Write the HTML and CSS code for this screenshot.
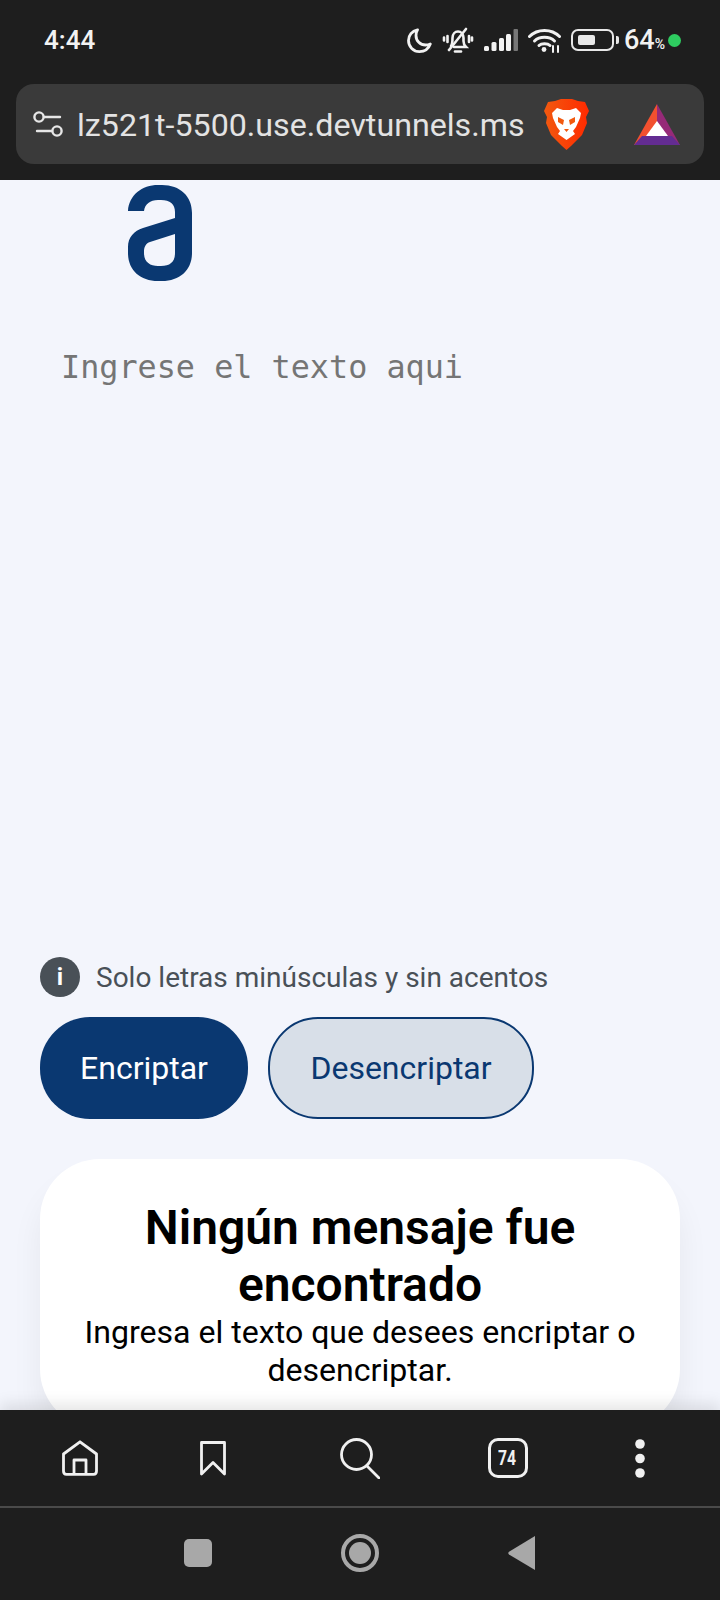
FILE: index.html
```html
<!DOCTYPE html>
<html lang="es">
<head>
  <meta charset="UTF-8">
  <title>Encriptador</title>
  <link rel="stylesheet" href="styles.css">
</head>
<body>
  <div class="screen">
    <header class="browser-top">
      <div class="status-bar">
        <span class="time">4:44</span>
        <div class="status-icons">
          <svg width="25" height="25" viewBox="0 0 25 25" fill="none" stroke="#f2f2f2" stroke-width="2.8" stroke-linejoin="round"><path d="M10.5 1.8 C5 3 1.5 7.5 1.5 12.5 C1.5 18.8 6.4 23.6 12.5 23.6 C17.4 23.6 21.6 20.6 23.3 16 C21.8 16.7 20.2 17 18.6 17 C13.2 17 9 12.8 9 7.4 C9 5.4 9.5 3.5 10.5 1.8 Z"/></svg>
          <svg width="32" height="27" viewBox="0 0 32 27" fill="none" stroke="#f2f2f2" stroke-width="2.6" stroke-linecap="round"><path d="M9 19 C10.5 17 10.5 14 10.5 11 C10.5 7 13 4.5 16 4.5 C19 4.5 21.5 7 21.5 11 V14 C21.5 17 22.5 18.5 24 20 H12"/><path d="M13 24.5 H19"/><path d="M7 23 L24 2"/><path d="M5.5 9 V15 M2 10.5 V13.5 M27 9 V15 M30 10.5 V13.5"/></svg>
          <svg width="34" height="22" viewBox="0 0 34 22"><rect x="0" y="17" width="5" height="5" rx="1.5" fill="#f2f2f2"/><rect x="7.5" y="13" width="5" height="9" rx="1.5" fill="#f2f2f2"/><rect x="15" y="9" width="5" height="13" rx="1.5" fill="#f2f2f2"/><rect x="22" y="5" width="5" height="17" rx="1.5" fill="#f2f2f2"/><rect x="29.5" y="0" width="4.5" height="22" rx="1" fill="#777"/></svg>
          <svg width="33" height="25" viewBox="0 0 33 25" fill="none" stroke="#f2f2f2" stroke-width="3" stroke-linecap="round"><path d="M1.5 8.5 C9.5 0.5 23.5 0.5 31.5 8.5"/><path d="M6.5 13 C11.5 8 21.5 8 26.5 13"/><path d="M11 17.5 C13.5 15 19.5 15 22 17.5"/><circle cx="16" cy="21.5" r="2.4" fill="#f2f2f2" stroke="none"/><path d="M25 18 V24 M30 18 V24" stroke-width="2"/></svg>
          <div class="battery"><div class="battery-body"><div class="battery-fill"></div></div><div class="battery-nub"></div></div>
          <span class="battery-text">64<small>%</small></span>
          <span class="green-dot"></span>
        </div>
      </div>
      <div class="address-bar">
        <svg class="tune" width="30" height="28" viewBox="0 0 30 28" fill="none" stroke="#e6e6e6" stroke-width="2.4" stroke-linecap="round"><circle cx="6" cy="7" r="4.6"/><path d="M11 7 H27"/><circle cx="24" cy="21" r="4.6"/><path d="M4 21 H19"/></svg>
        <span class="url">lz521t-5500.use.devtunnels.ms</span>
        <svg class="brave" width="45" height="51" viewBox="0 0 45 51">
          <defs><linearGradient id="braveGrad" x1="0" x2="1"><stop offset="0" stop-color="#f2590f"/><stop offset="1" stop-color="#ff2a00"/></linearGradient></defs>
          <path d="M11 2 L17 0 H28 L34 2 L41 3 L45 12 L42 18 L43 24 L38 36 L27 47 L22.5 51 L18 47 L7 36 L2 24 L3 18 L0 12 L4 3 Z" fill="url(#braveGrad)"/>
          <path d="M8 14 L13 9 L19 11 H26 L32 9 L37 14 L36 19 L32 28 L29 32 L31 35 L22.5 41 L14 35 L16 32 L13 28 L9 19 Z" fill="#fff"/>
          <path d="M14 18 L20 21 L19 26 L14 23 Z M31 18 L25 21 L26 26 L31 23 Z M20 30 H25 L22.5 33 Z" fill="#f2590f"/>
        </svg>
        <svg class="bat" width="46" height="41" viewBox="0 0 46 41">
          <path d="M23 0 L0 41 H15 L23 26 Z" fill="#f2502f"/>
          <path d="M23 0 L46 41 H31 L23 26 Z" fill="#962a78"/>
          <path d="M0 41 L8 32 H38 L46 41 Z" fill="#632c92"/>
          <path d="M23 17 L34 32 H12 Z" fill="#fff"/>
        </svg>
      </div>
    </header>

    <main class="page">
      <svg class="logo" width="64" height="96" viewBox="0 0 64 96">
        <path fill-rule="evenodd" fill="#0a3871" d="M0 26 C1 10 14 0 30 0 H34 C52 0 64 11 64 28 V68 C64 85 52 96 34 96 H30 C12 96 0 85 0 68 V62 C0 52 6 46 15 43 L47 33 V27 C47 19 42 15 33 15 H30 C22 15 17 19 16 26 Z M47 49 L22 57 C18 58 16 62 16 66 V68 C16 77 22 81 30 81 H33 C42 81 47 77 47 68 Z"/>
      </svg>

      <textarea class="message-input" spellcheck="false">Ingrese el texto aqui</textarea>

      <div class="hint">
        <span class="hint-icon">i</span>
        <span class="hint-text">Solo letras minúsculas y sin acentos</span>
      </div>

      <div class="actions">
        <button class="btn btn-primary">Encriptar</button>
        <button class="btn btn-secondary">Desencriptar</button>
      </div>

      <section class="result-card">
        <h2>Ningún mensaje fue encontrado</h2>
        <p>Ingresa el texto que desees encriptar o desencriptar.</p>
      </section>
    </main>

    <footer class="browser-bottom">
      <nav class="toolbar">
        <svg width="38" height="36" viewBox="0 0 38 36" fill="none" stroke="#f0f0f0" stroke-width="2.8" stroke-linejoin="round"><path d="M19 1.8 L2.5 14 V31 C2.5 33 3.5 34.4 5.5 34.4 H32.5 C34.5 34.4 35.5 33 35.5 31 V14 Z"/><path d="M13 34 V20 H25 V34"/></svg>
        <svg width="26" height="35" viewBox="0 0 26 35" fill="none" stroke="#f0f0f0" stroke-width="2.8" stroke-linejoin="round"><path d="M1.5 1.5 H24.5 V33 L13 21.5 L1.5 33 Z"/></svg>
        <svg width="40" height="41" viewBox="0 0 40 41" fill="none" stroke="#f0f0f0" stroke-width="2.8" stroke-linecap="round"><circle cx="16.5" cy="16.5" r="15"/><path d="M27 28 L39 40"/></svg>
        <div class="tab-count"><span>74</span></div>
        <svg width="10" height="39" viewBox="0 0 10 39" fill="#f0f0f0"><circle cx="5" cy="5" r="4.8"/><circle cx="5" cy="19.5" r="4.8"/><circle cx="5" cy="34" r="4.8"/></svg>
      </nav>
      <nav class="system-nav">
        <span class="sys-square"></span>
        <span class="sys-circle"><span class="sys-circle-inner"></span></span>
        <svg width="27" height="34" viewBox="0 0 27 34" fill="#a8a8a8"><path d="M27 0 V34 L1 18.5 C0 17.8 0 16.4 1 15.7 Z"/></svg>
      </nav>
    </footer>
  </div>
</body>
</html>
```

FILE: styles.css
```css
* {
  box-sizing: border-box;
}

body {
  margin: 0;
  background: #f3f5fc;
  font-family: Roboto, "Liberation Sans", sans-serif;
}

.screen {
  display: flex;
  flex-direction: column;
  width: 720px;
  height: 1600px;
  overflow: hidden;
}

/* browser chrome, top */
.browser-top {
  flex: none;
  height: 180px;
  padding: 0 16px;
  background: #1e1e1e;
}

.status-bar {
  display: flex;
  align-items: center;
  justify-content: space-between;
  height: 84px;
  padding: 0 23px 4px 28px;
  color: #f2f2f2;
}

.time {
  font-size: 26px;
  font-weight: 500;
}

.status-icons {
  display: flex;
  align-items: center;
  gap: 10px;
}

.battery {
  display: flex;
  align-items: center;
  gap: 2px;
}

.battery-body {
  width: 43px;
  height: 22px;
  padding: 4px 5px;
  border: 2.5px solid #e8e8e8;
  border-radius: 7px;
}

.battery-fill {
  width: 60%;
  height: 100%;
  background: #e8e8e8;
  border-radius: 2px;
}

.battery-nub {
  width: 3px;
  height: 8px;
  background: #e8e8e8;
  border-radius: 0 2px 2px 0;
}

.battery-text {
  margin-left: -5px;
  font-size: 27px;
  font-weight: 500;
}

.battery-text small {
  font-size: 14px;
}

.green-dot {
  width: 13px;
  height: 13px;
  margin-left: -7px;
  background: #2ecc60;
  border-radius: 50%;
}

.address-bar {
  display: flex;
  align-items: center;
  height: 80px;
  padding-left: 17px;
  background: #3a3a3a;
  border-radius: 18px;
}

.url {
  margin: 2px 0 0 14px;
  font-size: 32.2px;
  color: #e3e3e3;
  white-space: nowrap;
}

.brave {
  margin-left: 19px;
}

.bat {
  margin-left: 45px;
}

/* page */
.page {
  flex: 1;
  min-height: 0;
  padding: 5px 40px 0;
  overflow: hidden;
}

.logo {
  display: block;
  margin-left: 88px;
}

.message-input {
  display: block;
  width: 100%;
  height: 596px;
  margin: 64px 0 16px;
  padding: 0 21px;
  border: none;
  outline: none;
  resize: none;
  overflow: hidden;
  background: transparent;
  font-family: "DejaVu Sans Mono", "Liberation Mono", monospace;
  font-size: 31.8px;
  line-height: 44px;
  color: #757575;
}

.hint {
  display: flex;
  align-items: center;
  gap: 16px;
}

.hint-icon {
  display: flex;
  align-items: center;
  justify-content: center;
  width: 40px;
  height: 40px;
  background: #495057;
  border-radius: 50%;
  font-size: 24px;
  font-weight: 700;
  color: #fff;
}

.hint-text {
  font-size: 28px;
  color: #495057;
}

.actions {
  display: flex;
  gap: 20px;
  margin-top: 20px;
}

.btn {
  height: 102px;
  border-radius: 50px;
  font-family: inherit;
  font-size: 32px;
  cursor: pointer;
}

.btn-primary {
  width: 208px;
  background: #0a3871;
  border: none;
  color: #fff;
}

.btn-secondary {
  width: 266px;
  background: #d8dfe8;
  border: 2px solid #0a3871;
  color: #0a3871;
}

.result-card {
  margin-top: 40px;
  padding: 40px 32px;
  background: #fff;
  border-radius: 60px;
  box-shadow: 0 24px 32px rgba(0, 0, 0, 0.06);
  text-align: center;
}

.result-card h2 {
  margin: 0;
  font-size: 48px;
  font-weight: 600;
  line-height: 57px;
  color: #000;
}

.result-card p {
  margin: 0;
  font-size: 32.1px;
  line-height: 38px;
  color: #000;
}

/* browser chrome, bottom */
.browser-bottom {
  position: relative;
  flex: none;
  height: 190px;
  background: #1e1e1e;
  box-shadow: 0 -6px 14px rgba(0, 0, 0, 0.1);
}

.toolbar {
  display: grid;
  grid-template-columns: 160px 105px 190px 105px 160px;
  align-items: center;
  justify-items: center;
  height: 98px;
  border-bottom: 2px solid #4a4a4a;
}

.tab-count {
  display: flex;
  align-items: center;
  justify-content: center;
  width: 40px;
  height: 40px;
  border: 3px solid #f0f0f0;
  border-radius: 10px;
  font-size: 21px;
  font-weight: 700;
  color: #f0f0f0;
}

/* the browser draws this counter in a narrow face */
.tab-count span {
  transform: scaleX(0.75);
}

.system-nav {
  display: flex;
  align-items: center;
  justify-content: center;
  gap: 129px;
  height: 92px;
  padding: 0 2px 2px 0;
}

.sys-square {
  width: 28px;
  height: 28px;
  background: #a8a8a8;
  border-radius: 5px;
}

.sys-circle {
  display: flex;
  align-items: center;
  justify-content: center;
  width: 38px;
  height: 38px;
  border: 4px solid #a8a8a8;
  border-radius: 50%;
}

.sys-circle-inner {
  width: 22px;
  height: 22px;
  background: #a8a8a8;
  border-radius: 50%;
}
```
